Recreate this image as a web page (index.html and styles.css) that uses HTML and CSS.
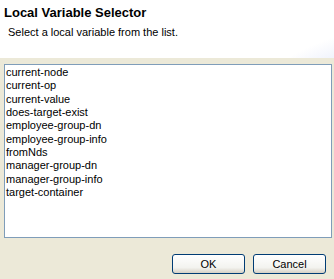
FILE: index.html
```html
<!DOCTYPE html>
<html>

<head>
    <meta charset="UTF-8" />
    <title>
        Local Variable Selector
    </title>
    <link rel="stylesheet" href="styles.css">
</head>

<body>
    <div class="dialog">
        <div class="header">
            <div class="title">Local Variable Selector</div>
            <div class="message">Select a local variable from the list.</div>
        </div>

        <div class="content">
            <div class="list">
                <div class="listItem">current-node</div>
                <div class="listItem">current-op</div>
                <div class="listItem">current-value</div>
                <div class="listItem">does-target-exist</div>
                <div class="listItem">employee-group-dn</div>
                <div class="listItem">employee-group-info</div>
                <div class="listItem">fromNds</div>
                <div class="listItem">manager-group-dn</div>
                <div class="listItem">manager-group-info</div>
                <div class="listItem">target-container</div>
            </div>

            <div class="buttons">
                <div class="button">OK</div>
                <div class="button">Cancel</div>
            </div>
        </div>
    </div>
</body>

</html>
```

FILE: styles.css
```css
body {
    margin: 0;
    font-family: "Liberation Sans", Arial, sans-serif;
    font-size: 11px;
    color: black;
}

.dialog {
    width: 334px;
    height: 279px;
    display: flex;
    flex-direction: column;
    background-color: #ECE9D8;
}

.header {
    height: 58px;
    box-sizing: border-box;
    padding: 5px 0 0 4px;
    background-color: white;
    background-image: radial-gradient(ellipse 260px 150px at 430px 135px, #D9E1F6 0%, #E6EBFA 55%, rgba(255, 255, 255, 0) 75%);
}

.title {
    font-weight: bold;
    font-size: 13px;
    height: 16px;
}

.message {
    padding: 5px 0 0 4px;
}

.content {
    flex: 1;
    display: flex;
    flex-direction: column;
    padding: 6px 2px 5px 4px;
}

.list {
    height: 174px;
    box-sizing: border-box;
    border: 1px solid #7F9DB9;
    background-color: white;
    padding: 1px 0 0 1px;
}

.listItem {
    height: 13.35px;
    line-height: 13px;
}

.buttons {
    flex: 1;
    display: flex;
    justify-content: flex-end;
    align-items: flex-end;
    gap: 8px;
    padding-right: 6px;
}

.button {
    width: 73px;
    height: 20px;
    box-sizing: border-box;
    border: 1px solid #003C74;
    border-radius: 3px;
    background: linear-gradient(#FFFFFF, #F3F3EF 70%, #D6D0C5);
    display: flex;
    justify-content: center;
    align-items: center;
}
```
